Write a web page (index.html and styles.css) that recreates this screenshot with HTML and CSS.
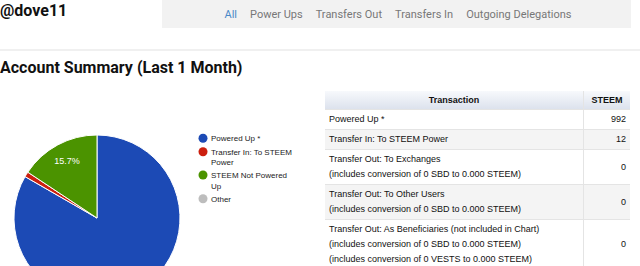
FILE: index.html
```html
<!DOCTYPE html>
<html lang="en">
<head>
  <meta charset="UTF-8">
  <title>@dove11 - Account Summary</title>
  <link rel="stylesheet" href="styles.css">
</head>
<body>

  <div class="topo">
    <h1 class="usuario">@dove11</h1>
    <ul class="menu">
      <li><a href="#" class="ativo">All</a></li>
      <li><a href="#">Power Ups</a></li>
      <li><a href="#">Transfers Out</a></li>
      <li><a href="#">Transfers In</a></li>
      <li><a href="#">Outgoing Delegations</a></li>
    </ul>
  </div>

  <h2 class="titulo">Account Summary (Last 1 Month)</h2>

  <div class="resumo">
    <div class="grafico">
      <svg width="325" height="188" viewBox="0 0 325 188">
        <!-- pizza: centro 97,140  raio 83 -->
        <g stroke="#fff" stroke-width="1" stroke-linejoin="round">
          <path d="M97 140 L97 57 A83 83 0 1 1 25.05 98.6 Z" fill="#1c4ab5"/>
          <path d="M97 140 L25.05 98.6 A83 83 0 0 1 27.8 94.2 Z" fill="#cc1f0e"/>
          <path d="M97 140 L27.8 94.2 A83 83 0 0 1 97 57 Z" fill="#4b9300"/>
        </g>
        <text x="67" y="86" class="rotulo">15.7%</text>

        <g class="legenda">
          <circle cx="203" cy="60.3" r="4.5" fill="#1c4ab5"/>
          <text x="211" y="63.3">Powered Up *</text>
          <circle cx="203" cy="73.7" r="4.5" fill="#cc1f0e"/>
          <text x="211" y="76.7">Transfer In: To STEEM</text>
          <text x="211" y="87.3">Power</text>
          <circle cx="203" cy="97" r="4.5" fill="#4b9300"/>
          <text x="211" y="100">STEEM Not Powered</text>
          <text x="211" y="110.5">Up</text>
          <circle cx="203" cy="120.7" r="4.5" fill="#bdbdbd"/>
          <text x="211" y="123.7">Other</text>
        </g>
      </svg>
    </div>

    <div class="tabela-container">
      <table>
        <thead>
          <tr>
            <th>Transaction</th>
            <th>STEEM</th>
          </tr>
        </thead>
        <tbody>
          <tr>
            <td>Powered Up *</td>
            <td class="valor">992</td>
          </tr>
          <tr>
            <td>Transfer In: To STEEM Power</td>
            <td class="valor">12</td>
          </tr>
          <tr>
            <td>Transfer Out: To Exchanges<br>(includes conversion of 0 SBD to 0.000 STEEM)</td>
            <td class="valor">0</td>
          </tr>
          <tr>
            <td>Transfer Out: To Other Users<br>(includes conversion of 0 SBD to 0.000 STEEM)</td>
            <td class="valor">0</td>
          </tr>
          <tr>
            <td>Transfer Out: As Beneficiaries (not included in Chart)<br>(includes conversion of 0 SBD to 0.000 STEEM)<br>(includes conversion of 0 VESTS to 0.000 STEEM)</td>
            <td class="valor">0</td>
          </tr>
        </tbody>
      </table>
    </div>
  </div>

</body>
</html>
```

FILE: styles.css
```css
body {
  font-family: Roboto, "Liberation Sans", sans-serif;
  background-color: #fff;
  margin: 0;
  padding: 0;
  color: #111;
}

.topo {
  display: flex;
  align-items: flex-start;
  border-bottom: 2px solid #f0f0f0;
  padding-bottom: 21px;
}

.usuario {
  margin: 0;
  padding-top: 1px;
  font-size: 16px;
  font-weight: bold;
  line-height: 20px;
}

.menu {
  list-style: none;
  margin: 0 9px 0 auto;
  padding: 0 0 0 3px;
  width: 469px;
  height: 28px;
  box-sizing: border-box;
  background-color: #f2f2f2;
  display: flex;
  justify-content: center;
  align-items: center;
  gap: 13px;
  font-size: 11px;
}

.menu li {
  line-height: 13px;
}

.menu a {
  color: #777;
  text-decoration: none;
}

.menu a.ativo {
  color: #4a89c8;
}

.titulo {
  margin: 7px 0 0 0;
  font-size: 16px;
  font-weight: bold;
  line-height: 20px;
}

.resumo {
  display: flex;
}

.grafico {
  width: 325px;
  flex-shrink: 0;
}

.grafico svg {
  display: block;
}

.rotulo {
  font-family: "Liberation Sans", Arial, sans-serif;
  font-size: 9px;
  fill: #fff;
  text-anchor: middle;
}

.legenda text {
  font-family: "Liberation Sans", Arial, sans-serif;
  font-size: 8px;
  fill: #222;
}

.tabela-container {
  width: 305px;
  padding-top: 13px;
}

/* tabela do resumo */
table {
  width: 100%;
  border-collapse: collapse;
  font-family: "Liberation Sans", Arial, sans-serif;
  font-size: 9px;
  color: #111;
}

th {
  background: linear-gradient(#f7f9fc, #dce2ed);
  font-weight: bold;
  text-align: center;
  padding: 2px 4px 1px;
  line-height: 15px;
  border: 1px solid #e4e4e4;
  border-top: none;
}

td {
  padding: 2px 4px;
  line-height: 15px;
  border: 1px solid #e4e4e4;
  border-left: none;
  text-align: left;
}

td.valor {
  width: 38px;
  text-align: right;
  border-right: none;
}

th:first-child {
  border-left: none;
}

th:last-child {
  border-right: none;
}

tbody tr:nth-child(even) {
  background-color: #f4f4f4;
}
```
